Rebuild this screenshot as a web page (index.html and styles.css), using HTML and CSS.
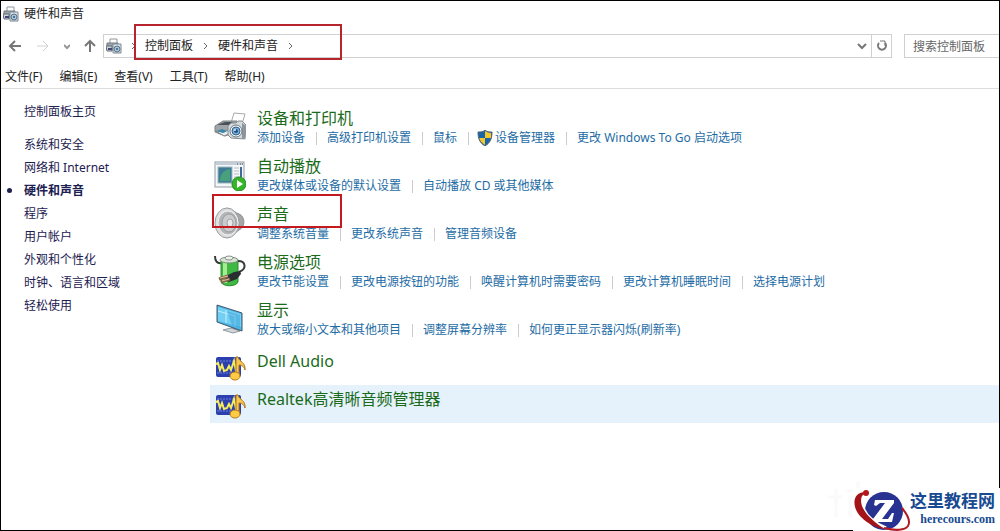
FILE: index.html
```html
<!DOCTYPE html>
<html lang="zh-CN">
<head>
    <meta charset="UTF-8">
    <meta name="viewport" content="width=device-width, initial-scale=1.0">
    <title>硬件和声音</title>
    <link rel="stylesheet" href="styles.css">
</head>
<body>
    <!-- 公用图标 -->
    <svg class="defs" aria-hidden="true">
        <symbol id="device" viewBox="0 0 16 16">
            <path d="M4 5V1h7v5" fill="#fff" stroke="#8b959c"/>
            <path d="M1 5h11v7H1z" fill="#9aa5ad" stroke="#6e7a83"/>
            <path d="M0 8h6v5H1z" fill="#cfd6db" stroke="#5e6a73"/>
            <path d="M2 10h4v2H2z" fill="#447"/>
            <path d="M7 6h8v9H7z" fill="#dce3e8" stroke="#7c8892"/>
            <circle cx="11" cy="11" r="3" fill="#a9c4d8" stroke="#5c7386"/>
            <circle cx="11" cy="11" r="1" fill="#2c5f88"/>
        </symbol>
        <symbol id="audio" viewBox="0 0 32 30">
            <rect x="2" y="4" width="25" height="20" rx="2" fill="#2b3fae"/>
            <path d="M3 8h23M3 20h23" stroke="#6f83dd" stroke-dasharray="2 1"/>
            <path d="M2 11l2-1 2 7 2-5 2 6 3-1 2-4 2 4 3-9 2 10 2-3" fill="none" stroke="#f4ec5c" stroke-width="2"/>
            <path d="M22 22V4h2c1 5 8 5 7 13-1-4-4-5-6-5v11z" fill="#f9c650" stroke="#a8731a"/>
            <ellipse cx="21" cy="23" rx="5" ry="4" fill="#ffcb45" stroke="#b47b18"/>
        </symbol>
    </svg>

    <div class="window">
        <header>
            <div class="title">
                <svg class="small"><use href="#device"/></svg>
                <span>硬件和声音</span>
            </div>
            <div class="toolbar">
                <div class="nav">
                    <button aria-label="后退"><svg width="14" height="14" viewBox="0 0 14 14"><path d="M13 7H2M7 2L2 7l5 5" fill="none" stroke="#777" stroke-width="2"/></svg></button>
                    <button aria-label="前进"><svg width="14" height="14" viewBox="0 0 14 14"><path d="M1 7h11M7 2l5 5-5 5" fill="none" stroke="#d2d2d2" stroke-width="1"/></svg></button>
                    <button aria-label="最近"><svg width="6" height="14" viewBox="0 0 6 14"><path d="M0 6l3 3 3-3" fill="none" stroke="#999" stroke-width="2"/></svg></button>
                    <button aria-label="向上"><svg width="12" height="14" viewBox="0 0 12 14"><path d="M6 13V2M1 7l5-5 5 5" fill="none" stroke="#777" stroke-width="2"/></svg></button>
                </div>
                <div class="address">
                    <svg class="small"><use href="#device"/></svg>
                    <svg class="arrow" viewBox="0 0 5 8"><path d="M1 1l3 3-3 3"/></svg>
                    <div class="crumbs">
                        <a href="#">控制面板</a>
                        <svg class="arrow" viewBox="0 0 5 8"><path d="M1 1l3 3-3 3"/></svg>
                        <a href="#">硬件和声音</a>
                        <svg class="arrow" viewBox="0 0 5 8"><path d="M1 1l3 3-3 3"/></svg>
                    </div>
                    <button class="drop" aria-label="展开"><svg width="10" height="8" viewBox="0 0 10 8"><path d="M1 2l4 4 4-4" fill="none" stroke="#777" stroke-width="2"/></svg></button>
                    <button class="refresh" aria-label="刷新"><svg width="12" height="12" viewBox="0 0 12 12"><path d="M3 3a4 4 0 1 0 6 0" fill="none" stroke="#777" stroke-width="2"/><path d="M4 1h5v5" fill="none" stroke="#777" stroke-width="1"/></svg></button>
                </div>
                <input class="search" type="text" placeholder="搜索控制面板" aria-label="搜索控制面板">
            </div>
            <div class="menu">
                <button>文件(F)</button>
                <button>编辑(E)</button>
                <button>查看(V)</button>
                <button>工具(T)</button>
                <button>帮助(H)</button>
            </div>
        </header>

        <div class="content">
            <nav class="side">
                <a class="home" href="#">控制面板主页</a>
                <a href="#">系统和安全</a>
                <a href="#">网络和 Internet</a>
                <a class="active" href="#">硬件和声音</a>
                <a href="#">程序</a>
                <a href="#">用户帐户</a>
                <a href="#">外观和个性化</a>
                <a href="#">时钟、语言和区域</a>
                <a href="#">轻松使用</a>
            </nav>

            <main>
                <section class="item">
                    <svg class="icon" viewBox="0 0 32 32">
                        <path d="M17 12l3-10 11 1-3 10z" fill="#fff" stroke="#aaa"/>
                        <path d="M1 15l8-5h14l-4 12-8 3-10-4z" fill="#a0a5a9" stroke="#7b8185"/>
                        <path d="M3 14l8-3h8l-3 3z" fill="#4a5157"/>
                        <path d="M2 20l8 1 4-2 3 3-7 3z" fill="#e6ecef" stroke="#888"/>
                        <path d="M3 20l5-2 5 2-4 2z" fill="#3988a9"/>
                        <path d="M14 15l3-3h5l2-2h4l4 4-1 14-14-1-3-3z" fill="#d4d9dc" stroke="#868c91"/>
                        <path d="M28 12l4 3-1 12-3 1z" fill="#8d959c"/>
                        <circle cx="22" cy="20" r="6" fill="#eef3f6" stroke="#727b83"/>
                        <circle cx="22" cy="20" r="4" fill="#7eb0da" stroke="#315f8b"/>
                        <circle cx="22" cy="20" r="2" fill="#1c4f86"/>
                        <circle cx="21" cy="19" r="1" fill="#d8f2ff"/>
                    </svg>
                    <div class="info">
                        <h2><a href="#">设备和打印机</a></h2>
                        <div class="links">
                            <a href="#">添加设备</a>
                            <a href="#">高级打印机设置</a>
                            <a href="#">鼠标</a>
                            <a class="admin" href="#"><svg class="shield" viewBox="0 0 16 16"><path d="M8 0c2 2 4 2 7 2 0 7-2 11-7 14C3 13 1 9 1 2c3 0 5 0 7-2z" fill="#1765ac"/><path d="M8 1c2 1 4 2 6 2v5H8zM2 8h6v7C5 13 3 11 2 8z" fill="#f6c72b"/><path d="M8 0c2 2 4 2 7 2 0 7-2 11-7 14C3 13 1 9 1 2c3 0 5 0 7-2z" fill="none" stroke="#55616c"/></svg>设备管理器</a>
                            <a href="#">更改 Windows To Go 启动选项</a>
                        </div>
                    </div>
                </section>

                <section class="item">
                    <svg class="icon" viewBox="0 0 32 32">
                        <rect x="1" y="3" width="29" height="25" fill="#f5f7f8" stroke="#919ba3"/>
                        <path d="M2 5h27" stroke="#c2cfda" stroke-width="2"/>
                        <path d="M23 5h1m2 0h1m1 0h1" stroke="#555"/>
                        <rect x="4" y="8" width="14" height="16" fill="#3d7c95" stroke="#9db5bf"/>
                        <path d="M6 22c0-7 4-11 10-12v12z" fill="#49a07c"/>
                        <path d="M20 9h5m-5 3h5m-5 3h5m-5 3h5" stroke="#b7bdc2"/>
                        <path d="M27 8v10" stroke="#416a9a" stroke-width="2"/>
                        <circle cx="25" cy="25" r="7" fill="#36b52b" stroke="#218b1d"/>
                        <path d="M23 21l6 4-6 4z" fill="#fff"/>
                    </svg>
                    <div class="info">
                        <h2><a href="#">自动播放</a></h2>
                        <div class="links">
                            <a href="#">更改媒体或设备的默认设置</a>
                            <a href="#">自动播放 CD 或其他媒体</a>
                        </div>
                    </div>
                </section>

                <section class="item marked">
                    <svg class="icon" viewBox="0 0 32 32">
                        <path d="M13 1c6 2 9 5 12 6 6 2 7 13 0 16-3 2-6 5-12 8z" fill="#a4a6a8" stroke="#8b8d8f"/>
                        <ellipse cx="13" cy="16" rx="12" ry="15" fill="#dcddde" stroke="#9a9c9e"/>
                        <ellipse cx="14" cy="16" rx="10" ry="12" fill="#b3b5b7" stroke="#f2f2f2"/>
                        <ellipse cx="15" cy="16" rx="7" ry="9" fill="#c9cbcd" stroke="#999c9e"/>
                        <ellipse cx="16" cy="16" rx="3" ry="4" fill="#e8e9ea" stroke="#a0a3a5"/>
                    </svg>
                    <div class="info">
                        <h2><a href="#">声音</a></h2>
                        <div class="links">
                            <a href="#">调整系统音量</a>
                            <a href="#">更改系统声音</a>
                            <a href="#">管理音频设备</a>
                        </div>
                    </div>
                </section>

                <section class="item">
                    <svg class="icon" viewBox="0 0 32 32">
                        <path d="M1 1c0 5 2 8 7 7" fill="none" stroke="#383d3b" stroke-width="2"/>
                        <path d="M7 5v22c2 5 15 5 17 0V5z" fill="#3fb944" stroke="#2b8a31"/>
                        <path d="M9 6v22h4V6z" fill="#a4eb91"/>
                        <ellipse cx="15" cy="5" rx="9" ry="3" fill="#d5e2d4" stroke="#789078"/>
                        <ellipse cx="15" cy="3" rx="4" ry="2" fill="#eef1ee" stroke="#8b948b"/>
                        <path d="M24 6c8 0 9 8 1 11" fill="none" stroke="#383d3b" stroke-width="2"/>
                        <path d="M12 21l8-4 6-1 1 3-4 5-8 3-4-2z" fill="#292e30"/>
                        <path d="M5 24l9-3m-7 6l9-3" stroke="#806247" stroke-width="3"/>
                        <path d="M6 23l8-2m-6 5l7-2" stroke="#e1c1a0"/>
                    </svg>
                    <div class="info">
                        <h2><a href="#">电源选项</a></h2>
                        <div class="links">
                            <a href="#">更改节能设置</a>
                            <a href="#">更改电源按钮的功能</a>
                            <a href="#">唤醒计算机时需要密码</a>
                            <a href="#">更改计算机睡眠时间</a>
                            <a href="#">选择电源计划</a>
                        </div>
                    </div>
                </section>

                <section class="item">
                    <svg class="icon" viewBox="0 0 32 32">
                        <path d="M17 24l6 2v3h-5z" fill="#8b969d"/>
                        <path d="M9 27l8-2 9 3-7 2z" fill="#d0d6d9" stroke="#929a9f"/>
                        <path d="M3 2l25 8v18L3 19z" fill="#4eb6e5" stroke="#40576a" stroke-width="1"/>
                        <path d="M4 4l23 7v13L4 18z" fill="#74d0f2"/>
                        <path d="M4 8l17 5v10M12 7v13" fill="none" stroke="#c3efff"/>
                        <path d="M13 8l13 4v13l-8-3z" fill="#38a0d5" opacity=".5"/>
                    </svg>
                    <div class="info">
                        <h2><a href="#">显示</a></h2>
                        <div class="links">
                            <a href="#">放大或缩小文本和其他项目</a>
                            <a href="#">调整屏幕分辨率</a>
                            <a href="#">如何更正显示器闪烁(刷新率)</a>
                        </div>
                    </div>
                </section>

                <div class="single">
                    <svg class="icon"><use href="#audio"/></svg>
                    <h2><a href="#">Dell Audio</a></h2>
                </div>
                <div class="single hover">
                    <svg class="icon"><use href="#audio"/></svg>
                    <h2><a href="#">Realtek高清晰音频管理器</a></h2>
                </div>
            </main>
        </div>
    </div>

    <!-- 右下角站点标志 -->
    <svg class="ghost" viewBox="0 0 54 40"><path d="M2 18h14M10 10v28M20 12h26M32 2v10M24 18h16v18H24zM24 24h16" fill="none" stroke="#fafafa" stroke-width="3"/></svg>
    <div class="brand">
        <svg class="logo" viewBox="0 0 60 43">
            <circle cx="31" cy="23" r="19" fill="#283391"/>
            <path d="M21 17l1-5h19v3L29 31h6l4-6h2l-2 9H20v-3l12-16h-5l-4 3z" fill="#fff"/>
            <path d="M8 13c2 13 13 22 25 27" fill="none" stroke="#fff" stroke-width="3"/>
            <path d="M13 4C-2 4-1 20 8 29c7 7 15 11 24 12C20 34 4 20 9 8z" fill="#a31318"/>
            <path d="M31 40c12 3 21 2 24-2 3-5-1-12-6-18" fill="none" stroke="#b11a20" stroke-width="2"/>
            <circle cx="13" cy="5" r="3" fill="#b5161b"/>
        </svg>
        <div class="words">
            <strong>这里教程网</strong>
            <span>herecours.com</span>
        </div>
    </div>
</body>
</html>
```

FILE: styles.css
```css
*, *::before{
    box-sizing: border-box;
}
body{
    margin: 0;
    font: 12px/18px "Noto Sans", "Noto Sans CJK SC", sans-serif;
    color: #222;
    background: #fff;
}
a{
    color: inherit;
    text-decoration: none;
}
button{
    padding: 0;
    border: 0;
    background: none;
    font: inherit;
    color: inherit;
}
svg{
    display: block;
    flex: none;
}
.defs{
    position: absolute;
    width: 0;
    height: 0;
}
.window{
    min-height: 100vh;
    border: 1px solid #000;
}
/* 标题栏 */
.title{
    display: flex;
    align-items: center;
    gap: 5px;
    height: 26px;
    padding-left: 2px;
}
.small{
    width: 16px;
    height: 16px;
}
/* 地址栏 */
.toolbar{
    display: flex;
    align-items: center;
    height: 38px;
}
.nav{
    display: flex;
    align-items: center;
    justify-content: space-between;
    width: 102px;
    padding: 0 7px;
}
.address{
    display: flex;
    align-items: center;
    flex: 1;
    height: 24px;
    padding-left: 2px;
    border: 1px solid #d0d0d0;
}
.arrow{
    width: 5px;
    height: 8px;
    margin: 0 9px;
    fill: none;
    stroke: #666;
}
.crumbs{
    position: relative;
    display: flex;
    align-items: center;
    gap: 1px;
    flex: 1;
}
.crumbs::before{
    content: "";
    position: absolute;
    top: -13px;
    left: -11px;
    width: 208px;
    height: 36px;
    border: 2px solid #b5252b;
}
.drop{
    padding: 0 4px;
}
.refresh{
    display: flex;
    align-items: center;
    justify-content: center;
    width: 20px;
    height: 22px;
    border-left: 1px solid #d0d0d0;
}
.search{
    width: 95px;
    height: 24px;
    margin-left: 12px;
    padding: 0 8px;
    border: 1px solid #d0d0d0;
    border-right: 0;
    font: inherit;
}
.search::placeholder{
    color: #666;
    opacity: 1;
}
.menu{
    display: flex;
    align-items: center;
    gap: 17px;
    height: 24px;
    padding-left: 4px;
    border-bottom: 1px solid #ddd;
}
/* 主体 */
.content{
    display: flex;
}
.side{
    display: flex;
    flex-direction: column;
    flex: none;
    width: 209px;
    padding: 11px 0 0 23px;
    line-height: 23px;
    color: #1c2050;
}
.side .home{
    margin-bottom: 10px;
}
.side .active{
    position: relative;
    font-weight: bold;
}
.side .active::before{
    content: "";
    position: absolute;
    top: 9px;
    left: -17px;
    width: 5px;
    height: 5px;
    border-radius: 50%;
    background: #1c2050;
}
main{
    flex: 1;
    padding-top: 14px;
}
h2{
    margin: 0;
    font-size: 16px;
    line-height: 20px;
    font-weight: normal;
    color: #1b6b1b;
}
.item{
    position: relative;
    display: flex;
    gap: 11px;
    padding: 5px 4px 4px;
}
.icon{
    width: 32px;
    height: 32px;
}
.item .icon{
    margin-top: 3px;
}
.marked::before{
    content: "";
    position: absolute;
    top: -5px;
    left: 2px;
    width: 130px;
    height: 34px;
    border: 2px solid #c3191f;
}
.links{
    display: flex;
    margin-top: 1px;
    color: #1e6ca5;
}
.links a{
    display: flex;
    align-items: center;
}
.links a + a::before{
    content: "";
    width: 1px;
    height: 13px;
    margin: 0 10px 0 11px;
    background: #ccc;
}
.links .admin::before{
    margin-right: 8px;
}
.shield{
    width: 16px;
    height: 16px;
    margin-right: 2px;
}
.single{
    display: flex;
    gap: 11px;
    height: 38px;
    padding: 4px;
}
.item + .single{
    margin-top: 4px;
}
.single .icon{
    height: 30px;
    margin-top: 2px;
}
.hover{
    background: #e5f2fb;
}
/* 标志 */
.brand{
    position: absolute;
    right: 0;
    bottom: 0;
    display: flex;
    width: 147px;
    height: 43px;
    background: #fff;
}
.logo{
    width: 60px;
    height: 43px;
}
.words{
    display: flex;
    flex-direction: column;
    align-items: flex-end;
    padding-top: 4px;
    margin-left: -3px;
    line-height: 17px;
    color: #174a91;
}
.words strong{
    font-size: 17px;
}
.words span{
    font: bold 12px/20px "Liberation Serif", serif;
}
.ghost{
    position: absolute;
    right: 120px;
    bottom: 12px;
    width: 54px;
    height: 40px;
}
```
